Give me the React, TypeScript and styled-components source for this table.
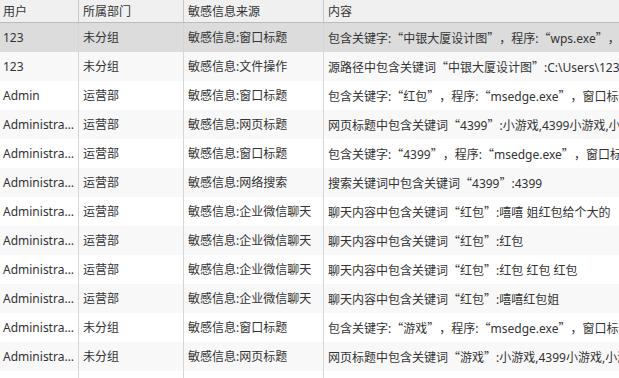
import React from "react";
import styled, { createGlobalStyle } from "styled-components";

const GlobalStyle = createGlobalStyle`
  html, body {
    margin: 0;
    padding: 0;
    background: #ffffff;
  }
  body {
    font-family: "Noto Sans", "Noto Sans CJK SC", sans-serif;
  }
`;

const COLS = "79px 105px 140px 700px";

const Viewport = styled.div`
  width: 619px;
  height: 378px;
  overflow: hidden;
  background: #ffffff;
  font-size: 12px;
  color: #333333;
  text-spacing-trim: space-all;
`;

const Table = styled.div`
  display: flex;
  flex-direction: column;
  width: 1024px;
`;

const HeaderRow = styled.div`
  display: grid;
  grid-template-columns: ${COLS};
  height: 22px;
  background: #f0f0f0;
  border-bottom: 1px solid #bcbcbc;
`;

const HeaderCell = styled.div<{ $first?: boolean }>`
  display: flex;
  align-items: center;
  padding-left: ${(p) => (p.$first ? "3px" : "4px")};
  border-right: 1px solid #c9c9c9;
  color: #333333;
  white-space: nowrap;
  overflow: hidden;
`;

const BodyRow = styled.div<{ $tone: "selected" | "stripe" | "plain" }>`
  display: grid;
  grid-template-columns: ${COLS};
  height: 29px;
  background: ${(p) =>
    p.$tone === "selected" ? "#dcdcdc" : p.$tone === "stripe" ? "#f8f8f8" : "#ffffff"};
`;

const Cell = styled.div<{ $first?: boolean }>`
  display: block;
  line-height: 29px;
  padding-left: ${(p) => (p.$first ? "3px" : "4px")};
  padding-right: 2px;
  border-right: 1px solid #d6d6d6;
  white-space: nowrap;
  overflow: hidden;
  text-overflow: ${(p) => (p.$first ? "ellipsis" : "clip")};
  color: #333333;
  text-spacing-trim: space-all;
`;

const Punct = styled.span`
  font-family: "Noto Sans CJK SC", sans-serif;
  text-spacing-trim: space-all;
`;

function rich(text: string) {
  return text.split(/([“”，])/).map((part, i) =>
    /^[“”，]$/.test(part) ? <Punct key={i}>{part}</Punct> : <React.Fragment key={i}>{part}</React.Fragment>
  );
}

type Row = { user: string; dept: string; source: string; content: string };

const rows: Row[] = [
  { user: "123", dept: "未分组", source: "敏感信息:窗口标题", content: "包含关键字:“中银大厦设计图”，程序:“wps.exe”，窗口标题:“中银大厦设计图.docx”" },
  { user: "123", dept: "未分组", source: "敏感信息:文件操作", content: "源路径中包含关键词“中银大厦设计图”:C:\\Users\\123\\Desktop\\中银大厦设计图.docx" },
  { user: "Admin", dept: "运营部", source: "敏感信息:窗口标题", content: "包含关键字:“红包”，程序:“msedge.exe”，窗口标题:“红包”" },
  { user: "Administrator", dept: "运营部", source: "敏感信息:网页标题", content: "网页标题中包含关键词“4399”:小游戏,4399小游戏,小游戏大全" },
  { user: "Administrator", dept: "运营部", source: "敏感信息:窗口标题", content: "包含关键字:“4399”，程序:“msedge.exe”，窗口标题:“4399小游戏”" },
  { user: "Administrator", dept: "运营部", source: "敏感信息:网络搜索", content: "搜索关键词中包含关键词“4399”:4399" },
  { user: "Administrator", dept: "运营部", source: "敏感信息:企业微信聊天", content: "聊天内容中包含关键词“红包”:嘻嘻 姐红包给个大的" },
  { user: "Administrator", dept: "运营部", source: "敏感信息:企业微信聊天", content: "聊天内容中包含关键词“红包”:红包" },
  { user: "Administrator", dept: "运营部", source: "敏感信息:企业微信聊天", content: "聊天内容中包含关键词“红包”:红包 红包 红包" },
  { user: "Administrator", dept: "运营部", source: "敏感信息:企业微信聊天", content: "聊天内容中包含关键词“红包”:嘻嘻红包姐" },
  { user: "Administrator", dept: "未分组", source: "敏感信息:窗口标题", content: "包含关键字:“游戏”，程序:“msedge.exe”，窗口标题:“小游戏”" },
  { user: "Administrator", dept: "未分组", source: "敏感信息:网页标题", content: "网页标题中包含关键词“游戏”:小游戏,4399小游戏,小游戏大全" },
];

export default function App() {
  return (
    <>
      <GlobalStyle />
      <Viewport>
        <Table>
          <HeaderRow>
            <HeaderCell $first>用户</HeaderCell>
            <HeaderCell>所属部门</HeaderCell>
            <HeaderCell>敏感信息来源</HeaderCell>
            <HeaderCell>内容</HeaderCell>
          </HeaderRow>
          {rows.map((r, i) => (
            <BodyRow key={i} $tone={i === 0 ? "selected" : i % 2 === 1 ? "stripe" : "plain"}>
              <Cell $first>{r.user}</Cell>
              <Cell>{r.dept}</Cell>
              <Cell>{r.source}</Cell>
              <Cell>{rich(r.content)}</Cell>
            </BodyRow>
          ))}
          <BodyRow $tone="plain">
            <Cell $first />
            <Cell />
            <Cell />
            <Cell />
          </BodyRow>
        </Table>
      </Viewport>
    </>
  );
}
